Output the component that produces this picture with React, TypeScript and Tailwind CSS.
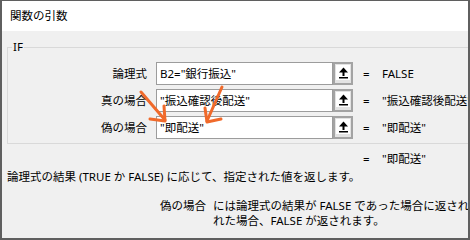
import React from 'react';

const font = { fontFamily: '"Noto Sans", "Noto Sans CJK JP", sans-serif' };

interface ArgRowProps {
  label: string;
  value: string;
  result: string;
}

const RefIcon: React.FC = () => (
  <svg width="11" height="12" viewBox="0 0 11 12">
    <polygon points="5.5,0.5 1,5.5 10,5.5" fill="#000" />
    <rect x="4.5" y="5" width="2" height="4" fill="#000" />
    <rect x="1" y="10" width="9" height="1.5" fill="#000" />
  </svg>
);

const ArgRow: React.FC<ArgRowProps> = ({ label, value, result }) => (
  <div className="flex items-center h-[23px]">
    <div className="w-[139px] text-right whitespace-nowrap">{label}</div>
    <div className="ml-[9px] w-[177px] h-[23px] border border-[#9c9c9c] bg-white flex items-center pl-[3px] whitespace-nowrap overflow-hidden">
      {value}
    </div>
    <div className="w-[20px] h-[23px] border-2 border-[#a3a3a3] bg-[#e3e3e3] flex items-start justify-center">
      <div className="mt-[1px] w-[14px] h-[15px] bg-white flex items-center justify-center">
        <RefIcon />
      </div>
    </div>
    <div className="ml-[10px] w-[19px] shrink-0">=</div>
    <div className="whitespace-nowrap">{result}</div>
  </div>
);

const App: React.FC = () => {
  return (
    <div
      className="relative w-[470px] h-[240px] border-2 border-t border-[#5f5f5f] bg-[#f0f0f0] overflow-hidden text-[11.5px] leading-[16px] text-black"
      style={font}
    >
      {/* title bar */}
      <div className="h-[30px] bg-white flex items-center pl-[8px] text-[11.5px]">関数の引数</div>

      <div className="w-[620px]">
        <fieldset className="ml-[5px] mt-[8px] border border-[#d9d9d9] pt-[7px] pb-[4px]">
          <legend className="ml-[4px] px-[1px] leading-[16px]">IF</legend>
          <div className="flex flex-col gap-[4px]">
            <ArgRow label="論理式" value={'B2="銀行振込"'} result="FALSE" />
            <ArgRow label="真の場合" value={'"振込確認後配送"'} result={'"振込確認後配送"'} />
            <ArgRow label="偽の場合" value={'"即配送"'} result={'"即配送"'} />
          </div>
        </fieldset>

        <div className="mt-[7px] flex pl-[361px] whitespace-nowrap">
          <span className="w-[19px]">=</span>
          <span>"即配送"</span>
        </div>

        <div className="mt-[2px] pl-[5px] whitespace-nowrap">
          論理式の結果 (TRUE か FALSE) に応じて、指定された値を返します。
        </div>

        <div className="mt-[13px] flex pl-[158px] leading-[15px]">
          <div className="w-[53px] shrink-0 whitespace-nowrap">偽の場合</div>
          <div className="whitespace-nowrap">
            <div>には論理式の結果が FALSE であった場合に返される値を指定します。省略さ</div>
            <div>れた場合、FALSE が返されます。</div>
          </div>
        </div>
      </div>

      {/* annotation arrows */}
      <svg className="absolute left-0 top-0 pointer-events-none" width="470" height="240" viewBox="-2 -1 470 240">
        <g stroke="#f06a2b" strokeWidth="3" strokeLinecap="round" strokeLinejoin="round" fill="none">
          <line x1="137" y1="90" x2="161" y2="118" />
          <polyline points="146,117 161,119 160,104" />
          <line x1="218" y1="85" x2="203" y2="119" />
          <polyline points="201,106 203,120 217,117" />
        </g>
      </svg>
    </div>
  );
};

export default App;
